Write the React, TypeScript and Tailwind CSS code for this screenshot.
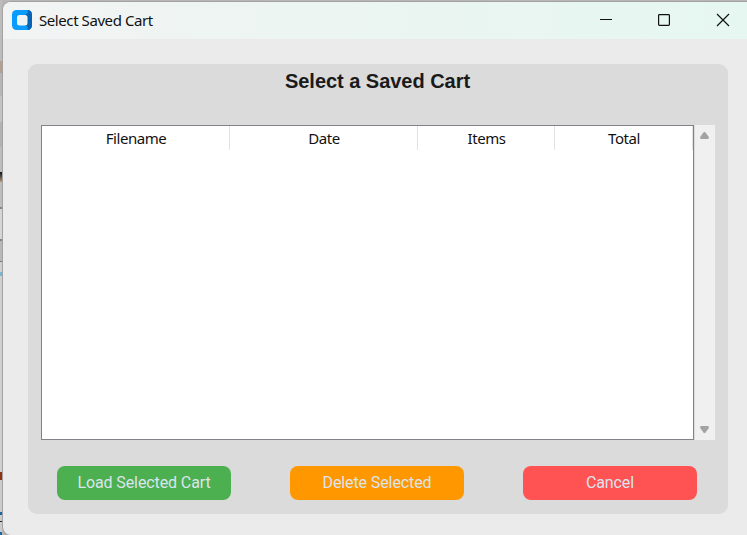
import React from "react";

const sans = "font-['Noto_Sans',sans-serif]";

function AppLogo() {
  return (
    <svg width="20" height="20" viewBox="0 0 20 20" className="shrink-0">
      <rect width="20" height="20" rx="4.5" fill="#0a9bff" />
      <path d="M15.5 0A4.5 4.5 0 0 1 20 4.5V15.5A4.5 4.5 0 0 1 15.5 20L16 16V4Z" fill="#0764b5" />
      <path d="M13.5 4.5L17 2V18L13.5 15.5Z" fill="#0764b5" />
      <rect x="5" y="5" width="10.5" height="10.5" rx="2.5" fill="#f0f3f4" />
    </svg>
  );
}

function TitleBar() {
  return (
    <header className="flex h-[37px] items-center bg-linear-to-r from-[#f2f4f4] via-[#ebf5f1] to-[#e6f7f2] pb-px pl-[9px]">
      <AppLogo />
      <span className={`${sans} ml-[7px] text-[15px] leading-[22px] tracking-[-0.42px] whitespace-nowrap text-[#111]`}>
        Select Saved Cart
      </span>
      <div className="mr-[4px] ml-auto flex items-center">
        <svg width="58" height="36" viewBox="0 0 58 36" fill="none" stroke="#111" shapeRendering="crispEdges">
          <path d="M22 17.5H34" />
        </svg>
        <svg width="58" height="36" viewBox="0 0 58 36" fill="none" stroke="#111">
          <rect x="22.6" y="12.6" width="10.8" height="10.8" rx="0.8" strokeWidth="1.2" />
        </svg>
        <svg width="50" height="36" viewBox="0 0 50 36" fill="none" stroke="#111" strokeWidth="1.2">
          <path d="M23 12L35 24M35 12L23 24" />
        </svg>
      </div>
    </header>
  );
}

const columns = [
  { label: "Filename", cell: "w-[188px]" },
  { label: "Date", cell: "w-[188px]" },
  { label: "Items", cell: "w-[137px]" },
  { label: "Total", cell: "w-[138px]" },
];

function CartTable() {
  return (
    <div className="flex h-[315px]">
      <div className="w-[653px] border border-[#82828a] bg-white">
        <div className="flex h-[24px]">
          {columns.map((c) => (
            <div
              key={c.label}
              className={`${c.cell} ${sans} flex items-center justify-center border-r border-[#e2e2e2] pb-px pl-px text-[15px] leading-[22px] tracking-[-0.45px] text-[#111]`}
            >
              {c.label}
            </div>
          ))}
        </div>
      </div>
      <div className="ml-px flex w-[20px] flex-col items-center justify-between bg-[#f0f0f0] py-[7px] pr-px">
        <svg width="9" height="7" viewBox="0 0 10 8" preserveAspectRatio="none" fill="#a3a3a3">
          <path d="M4 0.4Q5 -0.5 6 0.4L9.8 5.8Q10 8 8.8 8H1.2Q0 8 0.2 5.8Z" />
        </svg>
        <svg width="9" height="7" viewBox="0 0 10 8" preserveAspectRatio="none" fill="#a3a3a3">
          <path d="M4 7.6Q5 8.5 6 7.6L9.8 2.2Q10 0 8.8 0H1.2Q0 0 0.2 2.2Z" />
        </svg>
      </div>
    </div>
  );
}

const actions = [
  { label: "Load Selected Cart", color: "bg-[#4caf50]" },
  { label: "Delete Selected", color: "bg-[#ff9800]" },
  { label: "Cancel", color: "bg-[#ff5252]" },
];

const strip = [
  "h-[61px] bg-[#bcbcbc]",
  "h-[12px] bg-[#b5a08c]",
  "h-[23px] bg-[#b6b6b6]",
  "h-[26px] bg-[#c3c3c3]",
  "h-[25px] bg-[#b3b3b3]",
  "h-[25px] bg-[#bdbdbd]",
  "h-[10px] bg-linear-to-b from-[#101418] to-[#b99b78]",
  "h-[25px] bg-[#bdbdbd]",
  "h-[2px] bg-[#7d858c]",
  "h-[30px] bg-[#d6d6d6]",
  "h-[2px] bg-[#7d858c]",
  "h-[20px] bg-[#b8b8b8]",
  "h-[1px] bg-[#777]",
  "h-[10px] bg-[#d0d0d0]",
  "h-[4px] bg-[#72b9d2]",
  "h-[196px] bg-[#d0d0d0]",
  "h-[8px] bg-[#8c3512]",
  "h-[32px] bg-[#cbcbcb]",
  "h-[3px] bg-[#1667a5]",
  "h-[6px] bg-[#cbcbcb]",
  "h-[1px] bg-[#222]",
  "h-[10px] bg-[#cbcbcb]",
  "h-[3px] bg-[#1667a5]",
];

export default function App() {
  return (
    <div className="flex h-[535px] w-[747px] overflow-hidden bg-[#b9b7b6]">
      <div className="w-[2px] shrink-0">
        {strip.map((s, i) => (
          <div key={i} className={s} />
        ))}
      </div>
      <div className="mt-px flex h-[535px] w-[746px] shrink-0 flex-col overflow-hidden rounded-l-[9px] border border-r-0 border-[#a3a1a1] bg-[#ebebeb]">
        <TitleBar />
        <main className="mt-[25px] ml-[25px] h-[450px] w-[700px] rounded-[9px] bg-[#dbdbdb] pl-[13px]">
          <h1 className="h-[61px] w-[673px] pt-[2px] text-center font-['Liberation_Sans',Arial,sans-serif] text-[20px] leading-[30px] font-bold tracking-[-0.03px] text-[#1a1a1a]">
            Select a Saved Cart
          </h1>
          <CartTable />
          <div className="mt-[26px] ml-[16px] flex gap-[59px]">
            {actions.map((a) => (
              <button
                key={a.label}
                className={`${a.color} h-[34px] w-[174px] rounded-[8px] font-[Roboto,sans-serif] text-[16px] tracking-[-0.1px] text-[#dce4ee]`}
              >
                {a.label}
              </button>
            ))}
          </div>
        </main>
      </div>
    </div>
  );
}
